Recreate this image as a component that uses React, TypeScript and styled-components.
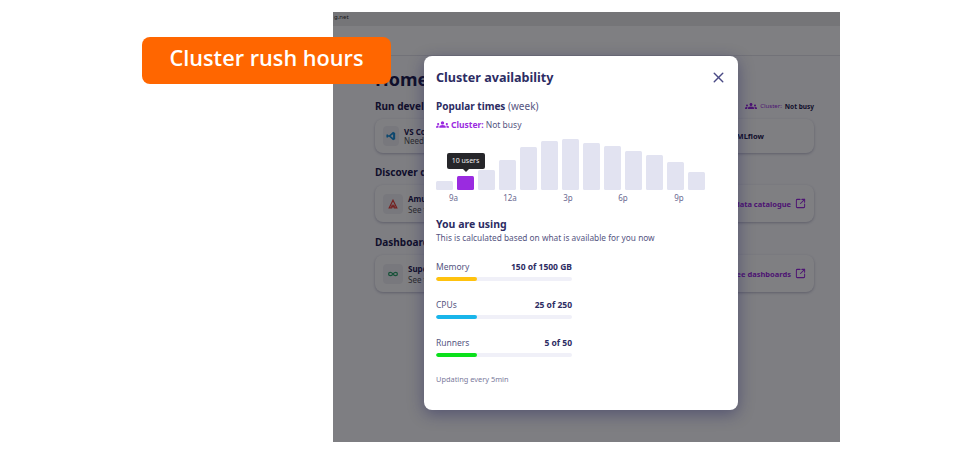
import styled, { createGlobalStyle } from 'styled-components';
import { SquareArrowOutUpRight, X } from 'lucide-react';
import { MdGroups } from 'react-icons/md';

const NAVY = '#2c2c63';
const PURPLE = '#9b2be0';

const GlobalStyle = createGlobalStyle`
  html, body {
    margin: 0;
    padding: 0;
    background: #fff;
  }
  * {
    box-sizing: border-box;
  }
  body {
    font-family: "Noto Sans", "Open Sans", sans-serif;
  }
`;

const Stage = styled.div`
  position: relative;
  width: 971px;
  height: 453px;
  padding: 12px 131px 11px 333px;
  overflow: hidden;
`;

const Callout = styled.div`
  position: absolute;
  z-index: 5;
  left: 142px;
  top: 37px;
  width: 249px;
  height: 47px;
  padding-bottom: 7px;
  border-radius: 8px;
  background: #ff6600;
  color: #fff;
  font-family: "Open Sans", sans-serif;
  font-size: 21.7px;
  font-weight: 600;
  display: flex;
  align-items: center;
  justify-content: center;
`;

const Frame = styled.div`
  position: relative;
  width: 507px;
  height: 430px;
  background: #fdfdff;
  overflow: hidden;
`;

const UrlBar = styled.div`
  height: 14px;
  padding-left: 1px;
  background: #eaeaea;
  font-size: 6px;
  line-height: 11px;
  color: #333;
`;

const Header = styled.div`
  height: 30px;
  background: #ffffff;
  border-bottom: 1px solid #e4e4ea;
`;

const Main = styled.div`
  padding: 9px 26px 0 42px;
`;

const Home = styled.h1`
  margin: 0 0 4px;
  font-size: 18px;
  line-height: 28px;
  font-weight: 700;
  color: #1f2050;
`;

const SectionHead = styled.div`
  display: flex;
  align-items: center;
  justify-content: space-between;
  height: 18px;
`;

const SectionTitle = styled.h2`
  margin: 0;
  font-size: 10px;
  font-weight: 700;
  color: #1f2050;
`;

const ClusterNote = styled.div`
  display: flex;
  align-items: center;
  gap: 3px;
  font-size: 6px;
  color: ${PURPLE};

  b {
    color: #1f2050;
    font-size: 6.5px;
  }
`;

const CardRow = styled.div<{ $h: number; $mb: number }>`
  display: grid;
  grid-template-columns: 1fr 1fr;
  gap: 16px;
  height: ${(p) => p.$h}px;
  margin: 4px 0 ${(p) => p.$mb}px;
`;

const Card = styled.div<{ $right?: boolean }>`
  display: flex;
  align-items: center;
  justify-content: ${(p) => (p.$right ? 'flex-end' : 'flex-start')};
  gap: 5px;
  padding: 0 8px;
  border-radius: 8px;
  background: #fff;
  box-shadow: 0 1px 3px rgba(40, 40, 90, 0.3);
`;

const CardIcon = styled.div<{ $w: number }>`
  width: ${(p) => p.$w}px;
  height: 20px;
  border-radius: 4px;
  background: #f1f1f5;
  display: flex;
  align-items: center;
  justify-content: center;
  flex-shrink: 0;
`;

const CardText = styled.div<{ $lh: number }>`
  font-size: 8px;
  line-height: ${(p) => p.$lh}px;
  color: #555;

  b {
    display: block;
    color: #1f2050;
  }
`;

const CardLink = styled.div`
  display: flex;
  align-items: center;
  gap: 4px;
  font-size: 7.5px;
  font-weight: 700;
  color: ${PURPLE};
`;

const Plain = styled.span`
  margin-right: 42px;
  font-size: 7.5px;
  font-weight: 700;
  color: #1f2050;
`;

const Overlay = styled.div`
  position: absolute;
  inset: 0;
  background: rgba(0, 0, 5, 0.5);
`;

const Modal = styled.div`
  position: absolute;
  left: 91px;
  top: 44px;
  width: 314px;
  height: 354px;
  padding: 11px 12px 0;
  border-radius: 8px;
  background: #fff;
  box-shadow: 0 4px 16px rgba(30, 30, 90, 0.45);
  color: ${NAVY};
`;

const ModalHead = styled.div`
  display: flex;
  align-items: center;
  justify-content: space-between;
  height: 20px;
  margin-bottom: 12px;
`;

const ModalTitle = styled.h3`
  margin: 0;
  font-size: 12.6px;
  font-weight: 700;
`;

const Close = styled.button`
  display: flex;
  border: 0;
  padding: 0;
  margin-right: -1px;
  background: none;
  color: #4a4a85;
`;

const Subtitle = styled.div`
  font-size: 10px;
  line-height: 15px;
  font-weight: 700;

  span {
    font-weight: 400;
    font-size: 10px;
    color: #55557f;
  }
`;

const ClusterLine = styled.div`
  display: flex;
  align-items: center;
  gap: 2px;
  margin-top: 4px;
  height: 13px;
  font-size: 8.5px;
  color: #55557f;

  b {
    color: ${PURPLE};
    font-weight: 700;
  }
`;

const Chart = styled.div`
  display: flex;
  align-items: flex-end;
  gap: 4px;
  height: 59px;
`;

const Bar = styled.div<{ $active?: boolean; $h: number }>`
  position: relative;
  width: 17px;
  height: ${(p) => p.$h}px;
  border-radius: 1.5px;
  background: ${(p) => (p.$active ? '#9a2be0' : '#e2e3f1')};
`;

const Tooltip = styled.div`
  position: absolute;
  left: 50%;
  bottom: 21px;
  transform: translateX(-50%);
  width: 38px;
  height: 16px;
  border-radius: 2px;
  background: #26262a;
  color: #eee;
  font-size: 7px;
  line-height: 16px;
  text-align: center;

  &::after {
    content: '';
    position: absolute;
    left: 50%;
    bottom: -3px;
    margin-left: -3px;
    border: 3px solid transparent;
    border-bottom: 0;
    border-top-color: #26262a;
  }
`;

const Hours = styled.div`
  display: grid;
  grid-template-columns: 35px 78px 38px 72px 40px;
  margin-top: 3px;
  font-size: 8px;
  line-height: 10px;
  text-align: center;
  color: #6a6a90;
`;

const UsingTitle = styled.div`
  margin-top: 14px;
  font-size: 10.5px;
  line-height: 15px;
  font-weight: 700;
`;

const UsingNote = styled.div`
  font-size: 8.3px;
  line-height: 12px;
  color: #55557f;
`;

const Meters = styled.div`
  display: flex;
  flex-direction: column;
  gap: 18px;
  width: 136px;
  margin-top: 17px;
`;

const MeterHead = styled.div`
  display: flex;
  justify-content: space-between;
  font-size: 8.5px;
  line-height: 12px;
  color: #55557f;

  b {
    color: ${NAVY};
    font-weight: 700;
  }
`;

const Track = styled.div`
  height: 4px;
  margin-top: 4px;
  border-radius: 2px;
  background: #f0f0f8;
  overflow: hidden;
`;

const Fill = styled.div<{ $color: string }>`
  height: 100%;
  border-radius: 2px;
  background: ${(p) => p.$color};
`;

const Updating = styled.div`
  margin-top: 17px;
  font-size: 7.4px;
  line-height: 11px;
  color: #7a7a9c;
`;

const BARS = [9, 14, 20, 30, 43, 49, 51, 47, 44, 39, 35, 28, 18];
const HOURS = ['9a', '12a', '3p', '6p', '9p'];
const METERS = [
  { label: 'Memory', value: '150 of 1500 GB', pct: 30, color: '#ffc20e' },
  { label: 'CPUs', value: '25 of 250', pct: 30, color: '#19b5ea' },
  { label: 'Runners', value: '5 of 50', pct: 30, color: '#0be01b' },
];

export default function App() {
  return (
    <Stage>
      <GlobalStyle />
      <Callout>Cluster rush hours</Callout>
      <Frame>
        <UrlBar>g.net</UrlBar>
        <Header />
        <Main>
          <Home>Home</Home>
          <SectionHead>
            <SectionTitle>Run development tools</SectionTitle>
            <ClusterNote>
              <MdGroups size={12} color="#9b2be0" />
              Cluster: <b>Not busy</b>
            </ClusterNote>
          </SectionHead>
          <CardRow $h={34} $mb={10}>
            <Card>
              <CardIcon $w={16}>
                <svg width="10" height="10" viewBox="0 0 24 24">
                  <path d="M17 2 22 4.500V19.500L17 22 7 13 3 16 1 15V9L3 8 7 11ZM17 7.500 11 12 17 16.500Z" fill="#1b8fd6" />
                </svg>
              </CardIcon>
              <CardText $lh={9}>
                <b>VS Code</b>
                Needs a runner
              </CardText>
            </Card>
            <Card $right>
              <Plain>MLflow</Plain>
            </Card>
          </CardRow>
          <SectionHead>
            <SectionTitle>Discover data</SectionTitle>
          </SectionHead>
          <CardRow $h={37} $mb={11}>
            <Card>
              <CardIcon $w={20}>
                <svg width="10" height="10" viewBox="0 0 24 24">
                  <path d="M12 3 21 21H15L12 15 9 21H3Z M7 17H17" fill="none" stroke="#e8403a" strokeWidth="3" />
                </svg>
              </CardIcon>
              <CardText $lh={11}>
                <b>Amundsen</b>
                See the data
              </CardText>
            </Card>
            <Card $right>
              <CardLink>
                See data catalogue
                <SquareArrowOutUpRight size={11} strokeWidth={2.2} />
              </CardLink>
            </Card>
          </CardRow>
          <SectionHead>
            <SectionTitle>Dashboards</SectionTitle>
          </SectionHead>
          <CardRow $h={37} $mb={0}>
            <Card>
              <CardIcon $w={20}>
                <svg width="10" height="10" viewBox="0 0 24 24">
                  <path d="M12 12C9 8 7 8 5.500 8A4 4 0 0 0 5.500 16C7 16 9 16 12 12C15 8 17 8 18.500 8A4 4 0 0 1 18.500 16C17 16 15 16 12 12Z" fill="none" stroke="#2fa36b" strokeWidth="3" />
                </svg>
              </CardIcon>
              <CardText $lh={11}>
                <b>Superset</b>
                See the dashboards
              </CardText>
            </Card>
            <Card $right>
              <CardLink>
                See dashboards
                <SquareArrowOutUpRight size={11} strokeWidth={2.2} />
              </CardLink>
            </Card>
          </CardRow>
        </Main>
        <Overlay />
        <Modal>
          <ModalHead>
            <ModalTitle>Cluster availability</ModalTitle>
            <Close>
              <X size={17} strokeWidth={2} />
            </Close>
          </ModalHead>
          <Subtitle>
            Popular times <span>(week)</span>
          </Subtitle>
          <ClusterLine>
            <MdGroups size={13} color="#9b2be0" />
            <b>Cluster:</b> Not busy
          </ClusterLine>
          <Chart>
            {BARS.map((h, i) => (
              <Bar key={i} $h={h} $active={i === 1}>
                {i === 1 && <Tooltip>10 users</Tooltip>}
              </Bar>
            ))}
          </Chart>
          <Hours>
            {HOURS.map((h) => (
              <span key={h}>{h}</span>
            ))}
          </Hours>
          <UsingTitle>You are using</UsingTitle>
          <UsingNote>This is calculated based on what is available for you now</UsingNote>
          <Meters>
            {METERS.map((m) => (
              <div key={m.label}>
                <MeterHead>
                  <span>{m.label}</span>
                  <b>{m.value}</b>
                </MeterHead>
                <Track>
                  <Fill $color={m.color} style={{ width: `${m.pct}%` }} />
                </Track>
              </div>
            ))}
          </Meters>
          <Updating>Updating every 5min</Updating>
        </Modal>
      </Frame>
    </Stage>
  );
}
